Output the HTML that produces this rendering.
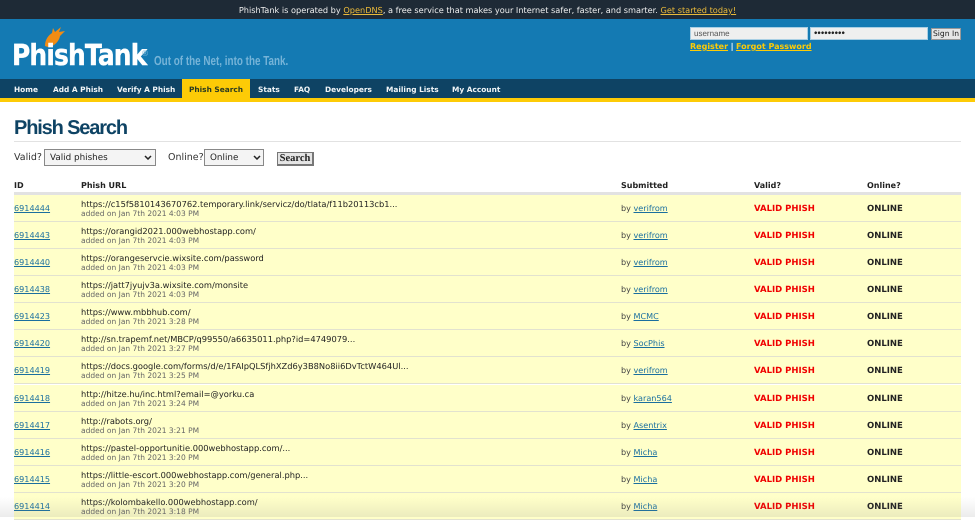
<!DOCTYPE html>
<html><head><meta charset="utf-8"><style>
html,body{margin:0;padding:0;background:#fff}
body{width:975px;height:517px;position:relative;overflow:hidden;font-family:"DejaVu Sans",sans-serif;color:#222;text-rendering:geometricPrecision}
.a{position:absolute;white-space:nowrap}
a{color:#1a6f9f;text-decoration:underline}
#top{left:0;top:0;width:975px;height:19px;background:#1e2a36;color:#eee;font-size:8.2px;line-height:20px;text-align:center}
#top a{color:#e9b93a}
#hd{left:0;top:19px;width:975px;height:60px;background:#147ab3}
#nav{left:0;top:79px;width:975px;height:19px;background:#0e4364}
#yl{left:0;top:98px;width:975px;height:4px;background:#fdcb06}
.n{top:79px;height:19px;line-height:21px;font-size:7.4px;font-weight:bold;color:#f2f6f8}
.n.on{background:#fdcb06;color:#2a3a20;top:79px;left:182px;width:68px;text-align:center;height:19px}
.inp{background:#efefef;height:11px;top:27px;font:8px/12px "Liberation Sans",sans-serif;color:#555;padding-left:3px;border:1px solid #a9cfe4}
.lnk{color:#fdcb06;font-weight:bold;font-size:8px}
.r{left:14px;width:947px;height:26px;background:#ffffc9;border-bottom:1px solid #e2e2cf}
.id{left:14px;font-size:8.1px;margin-top:1px}
.u{left:81px;font-size:8.3px;color:#222;margin-top:2px}
.d{left:81px;font-size:7.5px;color:#666;margin-top:1px}
.by{left:621px;font-size:8.1px;color:#444;margin-top:1px}
.v{left:754px;font-size:8.5px;font-weight:bold;color:#f00000;margin-top:2px}
.o{left:867px;font-size:8.5px;font-weight:bold;color:#222;margin-top:2px}
.h{top:181px;font-size:8px;font-weight:bold;color:#222}
</style></head><body>
<div class="a" id="top">PhishTank is operated by <a href="#">OpenDNS</a>, a free service that makes your Internet safer, faster, and smarter. <a href="#">Get started today!</a></div>
<div class="a" id="hd"></div>
<svg class="a" style="left:44px;top:26px" width="22" height="22" viewBox="0 0 22 22"><path d="M1 20C1 13 5 9 8 7L9 2 11 6 17 1 15 6 21 5 16 10C15 16 9 21 4 21Z" fill="#f28c13"/></svg>
<div class="a" style="left:12px;top:39px;font:bold 29px/32px 'DejaVu Sans',sans-serif;color:#fff;letter-spacing:-1px;transform:scaleX(.86);transform-origin:0 0;-webkit-text-stroke:.4px #fff">PhishTank</div>
<div class="a" style="left:141px;top:49px;font-size:8px;color:#7db8d8">®</div>
<div class="a" style="left:154px;top:53px;font:bold 13px/15px 'Liberation Sans',sans-serif;color:#76b4d8;transform:scaleX(.76);transform-origin:0 0">Out of the Net, into the Tank.</div>
<div class="a inp" style="left:690px;width:113px">username</div>
<div class="a inp" style="left:810px;width:113px;color:#222;font-size:9.8px">•••••••••</div>
<div class="a" style="left:931px;top:28px;width:28px;height:10px;background:#e6e6e6;border:1px solid #999;font-size:7.6px;line-height:10px;text-align:center;color:#222">Sign In</div>
<div class="a" style="left:690px;top:41px;font-size:8px;line-height:12px;color:#fff"><a class="lnk" href="#">Register</a> <b>|</b> <a class="lnk" href="#">Forgot Password</a></div>
<div class="a" id="nav"></div>
<div class="a" id="yl"></div>
<div class="a n" style="left:14px">Home</div>
<div class="a n" style="left:53px">Add A Phish</div>
<div class="a n" style="left:117px">Verify A Phish</div>
<div class="a n on">Phish Search</div>
<div class="a n" style="left:258px">Stats</div>
<div class="a n" style="left:294px">FAQ</div>
<div class="a n" style="left:325px">Developers</div>
<div class="a n" style="left:386px">Mailing Lists</div>
<div class="a n" style="left:452px">My Account</div>
<div class="a" style="left:14px;top:116px;font:bold 20px/24px 'Liberation Sans',sans-serif;color:#0e4364;letter-spacing:-1.15px">Phish Search</div>
<div class="a" style="left:14px;top:141px;width:947px;height:1px;background:#e2e2e2"></div>
<div class="a" style="left:14px;top:152px;font-size:9.5px;line-height:12px;color:#333">Valid?</div>
<div class="a" style="left:44px;top:149px;width:110px;height:15px;border:1px solid #888;background:#f4f4f4;font-size:8.8px;line-height:16px;text-indent:5px;box-sizing:content-box">Valid phishes</div>
<svg class="a" style="left:144px;top:155px" width="8" height="5"><path d="M1 1L4 4 7 1" fill="none" stroke="#222" stroke-width="1.5"/></svg>
<div class="a" style="left:168px;top:152px;font-size:9.5px;line-height:12px;color:#333">Online?</div>
<div class="a" style="left:204px;top:149px;width:58px;height:15px;border:1px solid #888;background:#f4f4f4;font-size:8.8px;line-height:16px;text-indent:5px">Online</div>
<svg class="a" style="left:253px;top:155px" width="8" height="5"><path d="M1 1L4 4 7 1" fill="none" stroke="#222" stroke-width="1.5"/></svg>
<div class="a" style="left:277px;top:152px;width:34px;height:11px;background:#e4e4e4;border:1px solid #777;border-right-width:2px;border-bottom-width:2px;font:bold 10.5px/11px 'Liberation Serif',serif;text-align:center;color:#222">Search</div>
<div class="a h" style="left:14px">ID</div>
<div class="a h" style="left:81px">Phish URL</div>
<div class="a h" style="left:621px">Submitted</div>
<div class="a h" style="left:754px">Valid?</div>
<div class="a h" style="left:867px">Online?</div>
<div class="a" style="left:14px;top:192px;width:947px;height:3px;background:#e2e2e2"></div>

<div class="a r" style="top:195px"></div>
<a class="a id" style="top:202px" href="#">6914444</a><div class="a u" style="top:197px">https://c15f5810143670762.temporary.link/servicz/do/tlata/f11b20113cb1...</div><div class="a d" style="top:208px">added on Jan 7th 2021 4:03 PM</div><div class="a by" style="top:202px">by <a href="#">verifrom</a></div><div class="a v" style="top:202px">VALID PHISH</div><div class="a o" style="top:202px">ONLINE</div>

<div class="a r" style="top:222px"></div>
<a class="a id" style="top:229px" href="#">6914443</a><div class="a u" style="top:224px">https://orangid2021.000webhostapp.com/</div><div class="a d" style="top:235px">added on Jan 7th 2021 4:03 PM</div><div class="a by" style="top:229px">by <a href="#">verifrom</a></div><div class="a v" style="top:229px">VALID PHISH</div><div class="a o" style="top:229px">ONLINE</div>

<div class="a r" style="top:249px"></div>
<a class="a id" style="top:256px" href="#">6914440</a><div class="a u" style="top:251px">https://orangeservcie.wixsite.com/password</div><div class="a d" style="top:262px">added on Jan 7th 2021 4:03 PM</div><div class="a by" style="top:256px">by <a href="#">verifrom</a></div><div class="a v" style="top:256px">VALID PHISH</div><div class="a o" style="top:256px">ONLINE</div>

<div class="a r" style="top:276px"></div>
<a class="a id" style="top:283px" href="#">6914438</a><div class="a u" style="top:278px">https://jatt7jyujv3a.wixsite.com/monsite</div><div class="a d" style="top:289px">added on Jan 7th 2021 4:03 PM</div><div class="a by" style="top:283px">by <a href="#">verifrom</a></div><div class="a v" style="top:283px">VALID PHISH</div><div class="a o" style="top:283px">ONLINE</div>

<div class="a r" style="top:303px"></div>
<a class="a id" style="top:310px" href="#">6914423</a><div class="a u" style="top:305px">https://www.mbbhub.com/</div><div class="a d" style="top:316px">added on Jan 7th 2021 3:28 PM</div><div class="a by" style="top:310px">by <a href="#">MCMC</a></div><div class="a v" style="top:310px">VALID PHISH</div><div class="a o" style="top:310px">ONLINE</div>

<div class="a r" style="top:330px"></div>
<a class="a id" style="top:337px" href="#">6914420</a><div class="a u" style="top:332px">http://sn.trapemf.net/MBCP/q99550/a6635011.php?id=4749079...</div><div class="a d" style="top:343px">added on Jan 7th 2021 3:27 PM</div><div class="a by" style="top:337px">by <a href="#">SocPhis</a></div><div class="a v" style="top:337px">VALID PHISH</div><div class="a o" style="top:337px">ONLINE</div>

<div class="a r" style="top:357px"></div>
<a class="a id" style="top:364px" href="#">6914419</a><div class="a u" style="top:359px">https://docs.google.com/forms/d/e/1FAIpQLSfjhXZd6y3B8No8ii6DvTctW464Ul...</div><div class="a d" style="top:370px">added on Jan 7th 2021 3:25 PM</div><div class="a by" style="top:364px">by <a href="#">verifrom</a></div><div class="a v" style="top:364px">VALID PHISH</div><div class="a o" style="top:364px">ONLINE</div>

<div class="a r" style="top:385px"></div>
<a class="a id" style="top:392px" href="#">6914418</a><div class="a u" style="top:387px">http://hitze.hu/inc.html?email=@yorku.ca</div><div class="a d" style="top:398px">added on Jan 7th 2021 3:24 PM</div><div class="a by" style="top:392px">by <a href="#">karan564</a></div><div class="a v" style="top:392px">VALID PHISH</div><div class="a o" style="top:392px">ONLINE</div>

<div class="a r" style="top:412px"></div>
<a class="a id" style="top:419px" href="#">6914417</a><div class="a u" style="top:414px">http://rabots.org/</div><div class="a d" style="top:425px">added on Jan 7th 2021 3:21 PM</div><div class="a by" style="top:419px">by <a href="#">Asentrix</a></div><div class="a v" style="top:419px">VALID PHISH</div><div class="a o" style="top:419px">ONLINE</div>

<div class="a r" style="top:439px"></div>
<a class="a id" style="top:446px" href="#">6914416</a><div class="a u" style="top:441px">https://pastel-opportunitie.000webhostapp.com/...</div><div class="a d" style="top:452px">added on Jan 7th 2021 3:20 PM</div><div class="a by" style="top:446px">by <a href="#">Micha</a></div><div class="a v" style="top:446px">VALID PHISH</div><div class="a o" style="top:446px">ONLINE</div>

<div class="a r" style="top:466px"></div>
<a class="a id" style="top:473px" href="#">6914415</a><div class="a u" style="top:468px">https://little-escort.000webhostapp.com/general.php...</div><div class="a d" style="top:479px">added on Jan 7th 2021 3:20 PM</div><div class="a by" style="top:473px">by <a href="#">Micha</a></div><div class="a v" style="top:473px">VALID PHISH</div><div class="a o" style="top:473px">ONLINE</div>

<div class="a r" style="top:493px"></div>
<a class="a id" style="top:500px" href="#">6914414</a><div class="a u" style="top:495px">https://kolombakello.000webhostapp.com/</div><div class="a d" style="top:506px">added on Jan 7th 2021 3:18 PM</div><div class="a by" style="top:500px">by <a href="#">Micha</a></div><div class="a v" style="top:500px">VALID PHISH</div><div class="a o" style="top:500px">ONLINE</div>

<div class="a" style="left:0;top:497px;width:975px;height:20px;background:linear-gradient(rgba(120,120,120,0),rgba(120,120,120,.14))"></div>
</body></html>
